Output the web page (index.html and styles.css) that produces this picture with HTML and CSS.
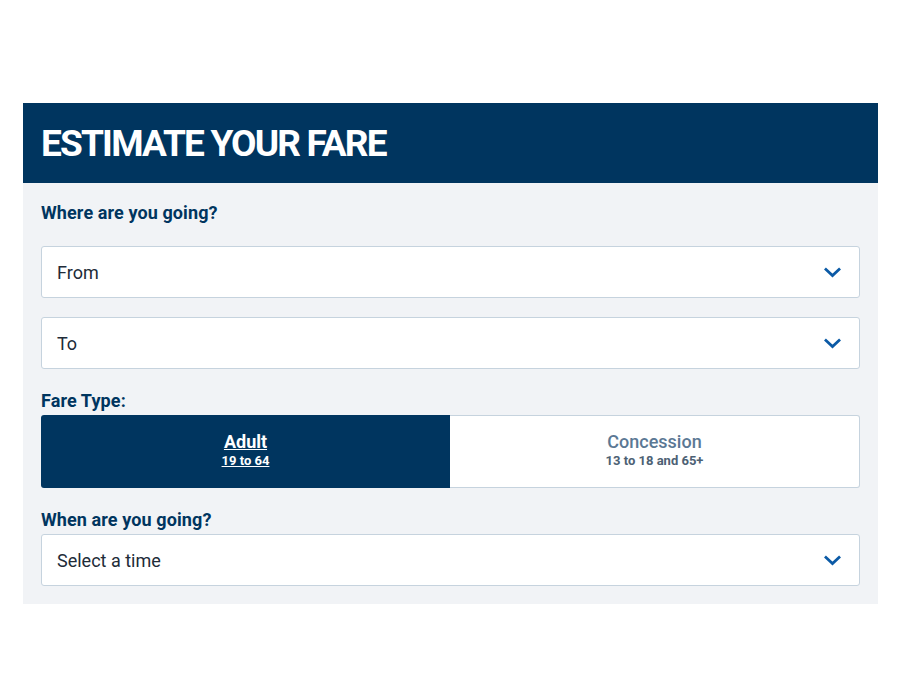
FILE: index.html
```html
<!DOCTYPE html>
<html lang="en">
<head>
<meta charset="utf-8">
<title>Estimate your fare</title>
<link rel="stylesheet" href="styles.css">
</head>
<body>
<section class="widget">
  <header class="widget-header">
    <h2 class="widget-title">ESTIMATE YOUR FARE</h2>
  </header>
  <div class="widget-body">
    <div class="field-label first">Where are you going?</div>
    <div class="select">
      <span class="select-text">From</span>
      <svg class="chevron" viewBox="0 0 17 11" width="17" height="11"><path d="M2 2.5 L8.5 8.5 L15 2.5" fill="none" stroke="#0b5aa6" stroke-width="2.8" stroke-linecap="square"/></svg>
    </div>
    <div class="select second">
      <span class="select-text">To</span>
      <svg class="chevron" viewBox="0 0 17 11" width="17" height="11"><path d="M2 2.5 L8.5 8.5 L15 2.5" fill="none" stroke="#0b5aa6" stroke-width="2.8" stroke-linecap="square"/></svg>
    </div>
    <div class="field-label">Fare Type:</div>
    <div class="toggle">
      <div class="toggle-option active">
        <span class="opt-title">Adult</span>
        <span class="opt-sub">19 to 64</span>
      </div>
      <div class="toggle-option">
        <span class="opt-title">Concession</span>
        <span class="opt-sub">13 to 18 and 65+</span>
      </div>
    </div>
    <div class="field-label">When are you going?</div>
    <div class="select">
      <span class="select-text">Select a time</span>
      <svg class="chevron" viewBox="0 0 17 11" width="17" height="11"><path d="M2 2.5 L8.5 8.5 L15 2.5" fill="none" stroke="#0b5aa6" stroke-width="2.8" stroke-linecap="square"/></svg>
    </div>
  </div>
</section>
</body>
</html>
```

FILE: styles.css
```css
html, body {
  margin: 0;
  padding: 0;
  background: #ffffff;
}

body {
  font-family: Roboto, "Open Sans", "Noto Sans", sans-serif;
  color: #00355f;
}

.widget {
  margin: 103px 0 0 23px;
  width: 855px;
}

.widget-header {
  height: 80px;
  background: #00355f;
  display: flex;
  align-items: center;
  padding: 0 18px;
}

.widget-title {
  margin: 0;
  color: #ffffff;
  font-size: 37px;
  font-weight: 700;
  letter-spacing: -1.8px;
  line-height: 1;
  padding-top: 0;
}

.widget-body {
  background: #f1f3f6;
  padding: 18px 18px 18px 18px;
}

.field-label {
  font-size: 18px;
  font-weight: 700;
  letter-spacing: 0.1px;
  line-height: 24px;
  color: #00355f;
  margin: 20px 0 2px;
}

.field-label.first {
  margin: 0 0 21px;
}

.select {
  height: 52px;
  box-sizing: border-box;
  background: #ffffff;
  border: 1px solid #c6d3de;
  border-radius: 3px;
  display: flex;
  align-items: center;
  justify-content: space-between;
  padding: 0 18px 0 15px;
}

.select.second {
  margin-top: 19px;
}

.select-text {
  font-size: 18px;
  color: #212b38;
}

.chevron {
  display: block;
}

.toggle {
  display: flex;
  height: 73px;
}

.toggle-option {
  flex: 1;
  display: flex;
  flex-direction: column;
  align-items: center;
  justify-content: center;
  background: #ffffff;
  border: 1px solid #c6d3de;
  border-left: none;
  border-radius: 0 3px 3px 0;
  color: #5b7894;
  padding-bottom: 2px;
}

.toggle-option.active {
  background: #00355f;
  border: none;
  border-radius: 3px 0 0 3px;
  color: #ffffff;
}

.opt-title {
  font-size: 18px;
  font-weight: 500;
  line-height: 20px;
}

.opt-sub {
  font-size: 13px;
  font-weight: 700;
  line-height: 17px;
  color: #4d6174;
}

.toggle-option.active .opt-title {
  font-weight: 700;
  text-decoration: underline;
}

.toggle-option.active .opt-sub {
  color: #ffffff;
  text-decoration: underline;
}
```
